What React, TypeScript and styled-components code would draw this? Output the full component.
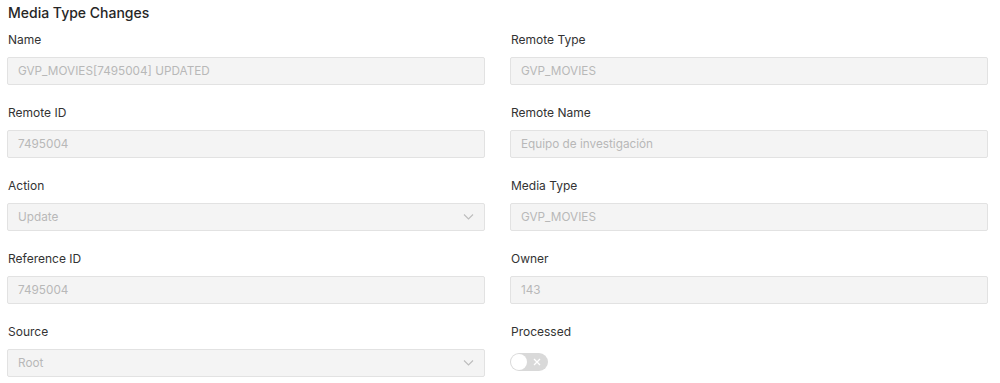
import styled, { createGlobalStyle } from 'styled-components';

const GlobalStyle = createGlobalStyle`
  body {
    margin: 0;
    background: #ffffff;
    font-family: Inter, 'Noto Sans', sans-serif;
    color: #333;
  }
`;

const Page = styled.div`
  padding: 3px 12px 0 7px;
`;

const Title = styled.h2`
  margin: 0 0 0 1px;
  font-size: 14px;
  font-weight: 500;
  line-height: 20px;
  color: #262626;
`;

const Grid = styled.div`
  display: grid;
  grid-template-columns: 1fr 1fr;
  column-gap: 25px;
  row-gap: 20px;
  margin-top: 9px;
`;

const Field = styled.div`
  display: flex;
  flex-direction: column;
`;

const Label = styled.label`
  font-size: 12px;
  line-height: 16px;
  color: #333;
  margin: 0 0 9px 1px;
`;

const Box = styled.div`
  position: relative;
  box-sizing: border-box;
  height: 28px;
  display: flex;
  align-items: center;
  padding: 0 10px;
  background: #f4f4f4;
  border: 1px solid #e2e2e2;
  border-radius: 2px;
  font-size: 11.75px;
  color: #b8b8b8;
`;

const Chevron = styled.svg`
  position: absolute;
  right: 10px;
  top: 9px;
`;

const Toggle = styled.div`
  position: relative;
  width: 38px;
  height: 18px;
  margin-top: 4px;
  border-radius: 9px;
  background: #d9d9d9;
`;

const Knob = styled.span`
  position: absolute;
  left: 1px;
  top: 1px;
  width: 16px;
  height: 16px;
  border-radius: 50%;
  background: #fff;
`;

const Cross = styled.svg`
  position: absolute;
  right: 7px;
  top: 5px;
`;

type Item = { label: string; value?: string; select?: boolean; toggle?: boolean };

const FIELDS: Item[] = [
  { label: 'Name', value: 'GVP_MOVIES[7495004] UPDATED' },
  { label: 'Remote Type', value: 'GVP_MOVIES' },
  { label: 'Remote ID', value: '7495004' },
  { label: 'Remote Name', value: 'Equipo de investigación' },
  { label: 'Action', value: 'Update', select: true },
  { label: 'Media Type', value: 'GVP_MOVIES' },
  { label: 'Reference ID', value: '7495004' },
  { label: 'Owner', value: '143' },
  { label: 'Source', value: 'Root', select: true },
  { label: 'Processed', toggle: true },
];

export default function App() {
  return (
    <>
      <GlobalStyle />
      <Page>
        <Title>Media Type Changes</Title>
        <Grid>
          {FIELDS.map((f) => (
            <Field key={f.label}>
              <Label>{f.label}</Label>
              {f.toggle ? (
                <Toggle>
                  <Knob />
                  <Cross width="8" height="8" viewBox="0 0 8 8">
                    <path d="M1 1L7 7M7 1L1 7" stroke="#fff" strokeWidth="1.3" />
                  </Cross>
                </Toggle>
              ) : (
                <Box>
                  {f.value}
                  {f.select && (
                    <Chevron width="11" height="8" viewBox="0 0 11 8">
                      <path d="M1 1.5L5.5 6L10 1.5" fill="none" stroke="#bdbdbd" strokeWidth="1.1" />
                    </Chevron>
                  )}
                </Box>
              )}
            </Field>
          ))}
        </Grid>
      </Page>
    </>
  );
}
